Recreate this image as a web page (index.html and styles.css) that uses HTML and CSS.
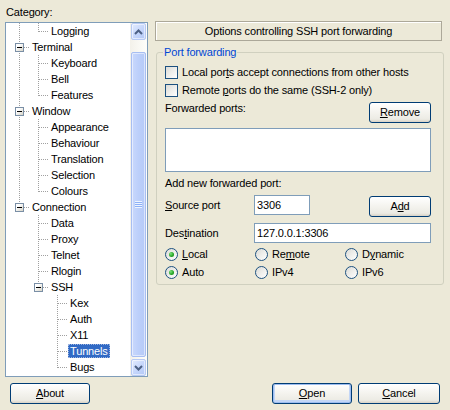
FILE: index.html
```html
<!DOCTYPE html>
<html>
<head>
<meta charset="utf-8">
<link rel="stylesheet" href="styles.css">
</head>
<body>
<div class="dialog">
  <div class="main">
    <div class="left">
      <div class="cat-label">Category:</div>
      <div class="tree">
        <div class="tree-items">
          <div class="row"><span class="g line"></span><span class="c last"></span><span class="lbl">Logging</span></div>
          <div class="row"><span class="c mid"><span class="exp"></span></span><span class="lbl">Terminal</span></div>
          <div class="row"><span class="g line"></span><span class="c mid"></span><span class="lbl">Keyboard</span></div>
          <div class="row"><span class="g line"></span><span class="c mid"></span><span class="lbl">Bell</span></div>
          <div class="row"><span class="g line"></span><span class="c last"></span><span class="lbl">Features</span></div>
          <div class="row"><span class="c mid"><span class="exp"></span></span><span class="lbl">Window</span></div>
          <div class="row"><span class="g line"></span><span class="c mid"></span><span class="lbl">Appearance</span></div>
          <div class="row"><span class="g line"></span><span class="c mid"></span><span class="lbl">Behaviour</span></div>
          <div class="row"><span class="g line"></span><span class="c mid"></span><span class="lbl">Translation</span></div>
          <div class="row"><span class="g line"></span><span class="c mid"></span><span class="lbl">Selection</span></div>
          <div class="row"><span class="g line"></span><span class="c last"></span><span class="lbl">Colours</span></div>
          <div class="row"><span class="c last"><span class="exp"></span></span><span class="lbl">Connection</span></div>
          <div class="row"><span class="g"></span><span class="c mid"></span><span class="lbl">Data</span></div>
          <div class="row"><span class="g"></span><span class="c mid"></span><span class="lbl">Proxy</span></div>
          <div class="row"><span class="g"></span><span class="c mid"></span><span class="lbl">Telnet</span></div>
          <div class="row"><span class="g"></span><span class="c mid"></span><span class="lbl">Rlogin</span></div>
          <div class="row"><span class="g"></span><span class="c last"><span class="exp"></span></span><span class="lbl">SSH</span></div>
          <div class="row"><span class="g"></span><span class="g"></span><span class="c mid"></span><span class="lbl">Kex</span></div>
          <div class="row"><span class="g"></span><span class="g"></span><span class="c mid"></span><span class="lbl">Auth</span></div>
          <div class="row"><span class="g"></span><span class="g"></span><span class="c mid"></span><span class="lbl">X11</span></div>
          <div class="row"><span class="g"></span><span class="g"></span><span class="c mid"></span><span class="lbl selected">Tunnels</span></div>
          <div class="row"><span class="g"></span><span class="g"></span><span class="c last"></span><span class="lbl">Bugs</span></div>
        </div>
        <div class="vscroll">
          <div class="sb-btn"><svg width="9" height="6" viewBox="0 0 9 6"><polyline points="1,5 4.5,1.5 8,5" fill="none" stroke="#4D6185" stroke-width="2"/></svg></div>
          <div class="sb-track">
            <div class="sb-thumb"><span class="grip"></span></div>
          </div>
          <div class="sb-btn"><svg width="9" height="6" viewBox="0 0 9 6"><polyline points="1,1 4.5,4.5 8,1" fill="none" stroke="#4D6185" stroke-width="2"/></svg></div>
        </div>
      </div>
    </div>
    <div class="right">
      <div class="panel-title">Options controlling SSH port forwarding</div>
      <fieldset class="group">
        <legend>Port forwarding</legend>
        <div class="chk-row first"><span class="check"></span><span class="txt">Local por<u>t</u>s accept connections from other hosts</span></div>
        <div class="chk-row"><span class="check"></span><span class="txt">Remote <u>p</u>orts do the same (SSH-2 only)</span></div>
        <div class="fwd-row"><span class="txt">Forwarded ports:</span><button class="btn side"><u>R</u>emove</button></div>
        <div class="listbox"></div>
        <div class="add-label">Add new forwarded port:</div>
        <div class="field-row src">
          <span class="field-label"><u>S</u>ource port</span>
          <div class="edit short">3306</div>
          <button class="btn side add">A<u>d</u>d</button>
        </div>
        <div class="field-row dst">
          <span class="field-label">Des<u>t</u>ination</span>
          <div class="edit long">127.0.0.1:3306</div>
        </div>
        <div class="radio-row first">
          <div class="opt"><span class="radio on"></span><span class="txt"><u>L</u>ocal</span></div>
          <div class="opt"><span class="radio"></span><span class="txt">Re<u>m</u>ote</span></div>
          <div class="opt"><span class="radio"></span><span class="txt">D<u>y</u>namic</span></div>
        </div>
        <div class="radio-row">
          <div class="opt"><span class="radio on"></span><span class="txt">Auto</span></div>
          <div class="opt"><span class="radio"></span><span class="txt">IPv4</span></div>
          <div class="opt"><span class="radio"></span><span class="txt">IPv6</span></div>
        </div>
      </fieldset>
    </div>
  </div>
  <div class="footer">
    <button class="btn foot"><u>A</u>bout</button>
    <button class="btn foot default open"><u>O</u>pen</button>
    <button class="btn foot cancel"><u>C</u>ancel</button>
  </div>
</div>
</body>
</html>
```

FILE: styles.css
```css
html, body {
  margin: 0;
  padding: 0;
  background: #ECE9D8;
}
body {
  font-family: "Liberation Sans", Arial, sans-serif;
  font-size: 11px;
  letter-spacing: -0.15px;
  color: #000;
}
.dialog {
  width: 450px;
  height: 410px;
  overflow: hidden;
}
.main {
  display: flex;
  align-items: flex-start;
  padding-left: 5px;
}
.left {
  width: 143px;
  padding-top: 6px;
}
.cat-label {
  line-height: 13px;
  height: 13px;
  padding-left: 1px;
  margin-bottom: 3px;
}
.tree {
  box-sizing: border-box;
  height: 355px;
  border: 1px solid #7F9DB9;
  background: #fff;
  display: flex;
}
.tree-items {
  flex: 1;
  display: flex;
  flex-direction: column;
  overflow: hidden;
}
.row {
  display: flex;
  height: 16px;
  flex: none;
  align-items: center;
}
.g {
  width: 19px;
  height: 16px;
  flex: none;
}
.g.line {
  background: repeating-linear-gradient(to bottom, #A0A0A0 0 1px, transparent 1px 2px) 13px 0 / 1px 16px no-repeat;
}
.c {
  width: 24px;
  height: 16px;
  flex: none;
  display: flex;
  align-items: flex-start;
}
.c.mid {
  background:
    repeating-linear-gradient(to right, #A0A0A0 0 1px, transparent 1px 2px) 14px 8px / 10px 1px no-repeat,
    repeating-linear-gradient(to bottom, #A0A0A0 0 1px, transparent 1px 2px) 13px 0 / 1px 16px no-repeat;
}
.c.last {
  background:
    repeating-linear-gradient(to right, #A0A0A0 0 1px, transparent 1px 2px) 14px 8px / 10px 1px no-repeat,
    repeating-linear-gradient(to bottom, #A0A0A0 0 1px, transparent 1px 2px) 13px 0 / 1px 9px no-repeat;
}
.exp {
  box-sizing: border-box;
  width: 9px;
  height: 9px;
  margin-left: 9px;
  margin-top: 4px;
  border: 1px solid #7A8FA6;
  background: linear-gradient(135deg, #FFFFFF 30%, #D6D3C6);
  display: flex;
  align-items: center;
  justify-content: center;
}
.exp::before {
  content: "";
  width: 5px;
  height: 1px;
  background: #000;
}
.lbl {
  padding: 0 2px;
  line-height: 14px;
  height: 14px;
  white-space: nowrap;
  box-sizing: border-box;
}
.lbl.selected {
  background: #316AC5;
  color: #fff;
  outline: 1px dotted #9DB4E0;
  outline-offset: -1px;
}
.vscroll {
  width: 17px;
  flex: none;
  display: flex;
  flex-direction: column;
  background: linear-gradient(to right, #F3F1EA, #FEFEFB);
}
.sb-btn {
  box-sizing: border-box;
  height: 17px;
  flex: none;
  margin: 0 1px 0 1px;
  border: 1px solid #B6C9F4;
  border-radius: 2px;
  background: linear-gradient(135deg, #E3EBFE, #C4D5FB 55%, #B3C8F6);
  box-shadow: inset 0 0 0 1px rgba(255,255,255,0.55);
  display: flex;
  align-items: center;
  justify-content: center;
}
.sb-track {
  flex: 1;
  display: flex;
  flex-direction: column;
  padding: 12px 0 2px 0;
}
.sb-thumb {
  flex: 1;
  margin: 0 1px;
  box-sizing: border-box;
  border: 1px solid #A7BEF2;
  border-radius: 2px;
  background: linear-gradient(to right, #C9D8FC, #BCCFFA 50%, #B5CAF8);
  box-shadow: inset 0 0 0 1px rgba(255,255,255,0.5);
  display: flex;
  align-items: center;
  justify-content: center;
}
.grip {
  width: 7px;
  height: 7px;
  background: repeating-linear-gradient(to bottom, #EEF4FE 0 1px, #8CB0F8 1px 2px);
}
.right {
  width: 288px;
  margin-left: 7px;
  padding-top: 21px;
}
.panel-title {
  box-sizing: border-box;
  width: 287px;
  height: 20px;
  line-height: 18px;
  text-align: center;
  border: 1px solid #ACA899;
  box-shadow: inset 1px 1px 0 #fff;
}
.group {
  margin: 5px 0 0 1px;
  padding: 0 12px 3px 8px;
  border: 1px solid #D0D0BF;
  border-radius: 3px;
  min-width: 0;
  width: 288px;
  box-sizing: border-box;
}
.group legend {
  padding: 0 1px;
  margin-left: -2px;
  line-height: 13px;
  color: #0046D5;
}
.chk-row {
  display: flex;
  align-items: center;
  height: 18px;
  white-space: nowrap;
}
.chk-row.first {
  margin-top: 4px;
}
.check {
  box-sizing: border-box;
  width: 13px;
  height: 13px;
  flex: none;
  border: 1px solid #1C5180;
  background: linear-gradient(135deg, #DCDCD7, #FFFFFF);
  margin-right: 4px;
}
.txt {
  white-space: nowrap;
}
.fwd-row {
  display: flex;
  align-items: flex-start;
  margin-top: 3px;
  height: 21px;
  line-height: 13px;
}
.btn {
  font-family: inherit;
  font-size: 11px;
  letter-spacing: inherit;
  color: #000;
  padding: 0;
  margin: 0;
  box-sizing: border-box;
  border: 1px solid #003C74;
  border-radius: 3px;
  background: linear-gradient(to bottom, #FFFFFF 0%, #F4F3EE 50%, #ECEBE4 85%, #D8D2C6 100%);
  height: 21px;
  line-height: 19px;
  text-align: center;
}
.btn.side {
  width: 62px;
  margin-left: auto;
}
.listbox {
  margin-top: 5px;
  height: 44px;
  box-sizing: border-box;
  border: 1px solid #7F9DB9;
  background: #fff;
}
.add-label {
  margin-top: 5px;
  line-height: 13px;
  height: 13px;
}
.field-row {
  display: flex;
  align-items: flex-start;
  white-space: nowrap;
}
.field-row.src {
  margin-top: 5px;
  height: 22px;
}
.field-row.dst {
  margin-top: 6px;
  height: 20px;
}
.field-label {
  width: 89px;
  line-height: 20px;
  flex: none;
}
.edit {
  box-sizing: border-box;
  height: 20px;
  border: 1px solid #7F9DB9;
  background: #fff;
  padding-left: 2px;
  line-height: 18px;
}
.edit.short {
  width: 56px;
}
.edit.long {
  width: 177px;
}
.btn.add {
  margin-top: 1px;
}
.radio-row {
  display: flex;
  height: 18px;
  align-items: center;
}
.radio-row.first {
  margin-top: 2px;
}
.opt {
  width: 90px;
  display: flex;
  align-items: center;
  flex: none;
}
.radio {
  box-sizing: border-box;
  width: 13px;
  height: 13px;
  flex: none;
  border-radius: 50%;
  border: 1px solid #1C5180;
  background: linear-gradient(135deg, #DCDCD7, #FFFFFF);
  margin-right: 4px;
  display: flex;
  align-items: center;
  justify-content: center;
}
.radio.on::before {
  content: "";
  width: 5px;
  height: 5px;
  border-radius: 50%;
  background: radial-gradient(circle at 35% 35%, #7BE37B, #21A121 60%, #18861A);
}
.footer {
  display: flex;
  margin-top: 6px;
  padding: 0 10px;
}
.btn.foot {
  width: 80px;
}
.btn.open {
  margin-left: auto;
}
.btn.cancel {
  margin-left: 6px;
  width: 82px;
}
.btn.default {
  box-shadow: inset 0 0 0 1px #9DBDF0, inset 0 -1px 0 2px #C3D6F6;
}
```
